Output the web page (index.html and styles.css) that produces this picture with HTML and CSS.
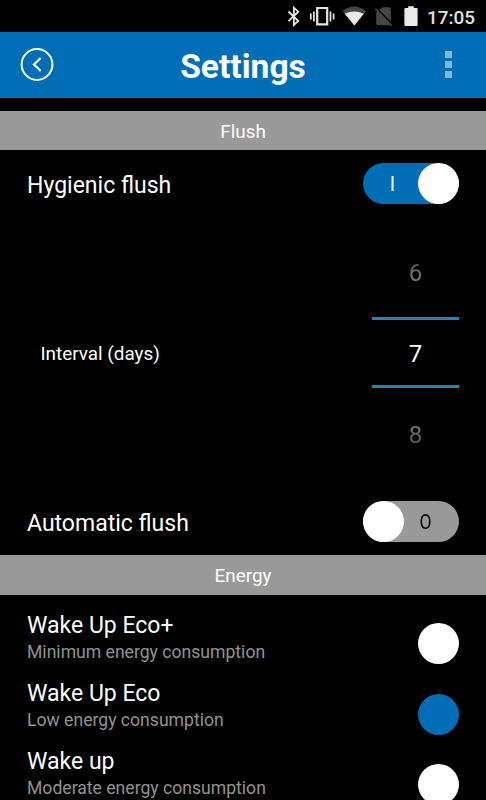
FILE: index.html
```html
<!DOCTYPE html>
<html lang="en">
<head>
<meta charset="utf-8">
<title>Settings</title>
<link rel="stylesheet" href="styles.css">
</head>
<body>
<div class="status">
  <svg class="status-icons" width="146" height="32" viewBox="276 0 146 32" aria-hidden="true">
    <path d="M288.500 11.500l9.800 9.500-4.400 4V7.700l4.400 4-9.800 9.500" fill="none" stroke="#e6e6e6" stroke-width="1.800"/>
    <path d="M317.200 8h10v16.400h-10z" fill="none" stroke="#e6e6e6" stroke-width="2.200"/>
    <path d="M310.800 13.500v6M313.900 11.500v10M330.500 11.500v10M333.600 13.500v6" fill="none" stroke="#e6e6e6" stroke-width="1.700"/>
    <path d="M342.500 11.100Q354.300 1.900 366.100 11.100L354.300 25.500z" fill="#464646"/>
    <path d="M344.800 13.700Q354.300 9.300 363.800 13.700L354.300 25.500z" fill="#eaeaea"/>
    <path d="M382.500 7.300H389q1.800 0 1.800 1.800V23.500q0 1.800-1.800 1.800H378q-1.800 0-1.800-1.800V13z" fill="#464646"/>
    <path d="M376.600 8.500l16.500 17" stroke="#000" stroke-width="2"/>
    <path d="M375.200 8.800l16.500 17" stroke="#464646" stroke-width="1.700"/>
    <path d="M408.200 6.200h5.600v1.800h2.800q1 0 1 1v16q0 1-1 1h-11.200q-1 0-1-1V9q0-1 1-1h2.800z" fill="#eaeaea"/>
  </svg>
  <span class="clock">17:05</span>
</div>
<header class="header">
  <svg class="back" width="34" height="34" viewBox="0 0 34 34" aria-hidden="true">
    <circle cx="17" cy="16.500" r="15.400" fill="none" stroke="#fff" stroke-width="2"/>
    <path d="M20.700 10L14 16.500l6.700 6.500" fill="none" stroke="#fff" stroke-width="2.200"/>
  </svg>
  <h1 class="title">Settings</h1>
  <div class="menu"><i></i><i></i><i></i></div>
</header>
<h2 class="section section-first">Flush</h2>
<div class="row">
  <span class="label">Hygienic flush</span>
  <div class="toggle toggle-on"><span class="mark">I</span><span class="knob"></span></div>
</div>
<div class="interval">
  <span class="interval-label">Interval (days)</span>
  <div class="picker">
    <span class="value dim-top">6</span>
    <span class="value current">7</span>
    <span class="value dim-bottom">8</span>
  </div>
</div>
<div class="row">
  <span class="label">Automatic flush</span>
  <div class="toggle toggle-off"><span class="knob"></span><span class="mark">O</span></div>
</div>
<h2 class="section">Energy</h2>
<div class="energy">
  <div class="modes">
    <div class="mode"><div class="label">Wake Up Eco+</div><div class="hint">Minimum energy consumption</div></div>
    <div class="mode"><div class="label">Wake Up Eco</div><div class="hint">Low energy consumption</div></div>
    <div class="mode"><div class="label">Wake up</div><div class="hint">Moderate energy consumption</div></div>
  </div>
  <div class="radios">
    <span class="radio"></span>
    <span class="radio selected"></span>
    <span class="radio"></span>
  </div>
</div>
</body>
</html>
```

FILE: styles.css
```css
* { box-sizing: border-box; }
html { background: #000; }
body {
  margin: 0;
  height: 800px;
  overflow: hidden;
  background: #000;
  color: #fff;
  font-family: Roboto, "Liberation Sans", sans-serif;
}
.status {
  height: 32px;
  display: flex;
  justify-content: flex-end;
  padding-right: 11px;
}
.status-icons {
  flex: none;
  margin-right: 5px;
}
.clock {
  width: 48px;
  font-size: 18.900px;
  font-weight: 500;
  line-height: 35px;
  color: #e0e0e0;
}
.header {
  height: 65.500px;
  display: grid;
  grid-template-columns: 64px 1fr 64px;
  align-items: center;
  background: #006eb6;
}
.back { margin-left: 20px; }
.title {
  margin: 5px 0 0;
  text-align: center;
  font-size: 33.600px;
  font-weight: 700;
  line-height: 40px;
}
.menu {
  display: flex;
  flex-direction: column;
  gap: 3px;
  padding-left: 23px;
}
.menu i {
  width: 7px;
  height: 7px;
  background: #80b7db;
}
.section {
  margin: 0;
  height: 40px;
  background: #999;
  text-align: center;
  font-size: 18.900px;
  font-weight: 400;
  line-height: 42px;
}
.section-first { margin-top: 13px; height: 39.500px; }
.row {
  height: 67px;
  display: flex;
  justify-content: space-between;
  align-items: center;
  padding: 0 27px;
}
.row .label { padding-top: 4px; }
.label {
  font-size: 23px;
  line-height: 28px;
}
.toggle {
  width: 96px;
  height: 41px;
  display: flex;
  align-items: center;
  border-radius: 21px;
}
.toggle-on {
  background: #006eb6;
  padding-left: 4px;
}
.toggle-off {
  background: #999;
  color: #000;
  padding-right: 12px;
}
.knob {
  width: 41px;
  height: 41px;
  border-radius: 50%;
  background: #fff;
}
.mark {
  flex: 1;
  text-align: center;
  font-size: 19.500px;
  padding-top: 1px;
}
.toggle-off .mark { transform: scaleX(0.9); }
.interval {
  height: 271px;
  display: flex;
  justify-content: space-between;
  align-items: center;
  padding: 0 27px 0 40.400px;
}
.interval-label {
  font-size: 18.900px;
  padding-top: 2px;
}
.picker {
  width: 87px;
  display: grid;
  grid-template-rows: 90px 71px 90px;
  text-align: center;
}
.value { font-size: 24px; }
.current {
  border-top: 3px solid #2384ad;
  border-bottom: 3px solid #2384ad;
  line-height: 69px;
}
.dim-top, .dim-bottom {
  line-height: 92px;
  color: transparent;
  background-clip: text;
}
.dim-bottom { line-height: 94px; }
.dim-top { background-image: linear-gradient(#585858 40%, #808080 60%); }
.dim-bottom { background-image: linear-gradient(#808080 40%, #585858 60%); }
.energy {
  display: flex;
  justify-content: space-between;
  padding: 0 27px;
}
.modes { padding-top: 17px; }
.mode { height: 68px; }
.hint {
  font-size: 17.600px;
  line-height: 26px;
  margin-top: -1px;
  color: #929292;
}
.radios {
  display: flex;
  flex-direction: column;
  gap: 29.700px;
  padding-top: 28px;
}
.radio {
  width: 41px;
  height: 41px;
  border-radius: 50%;
  background: #fff;
}
.selected { background: #006eb6; }
```
